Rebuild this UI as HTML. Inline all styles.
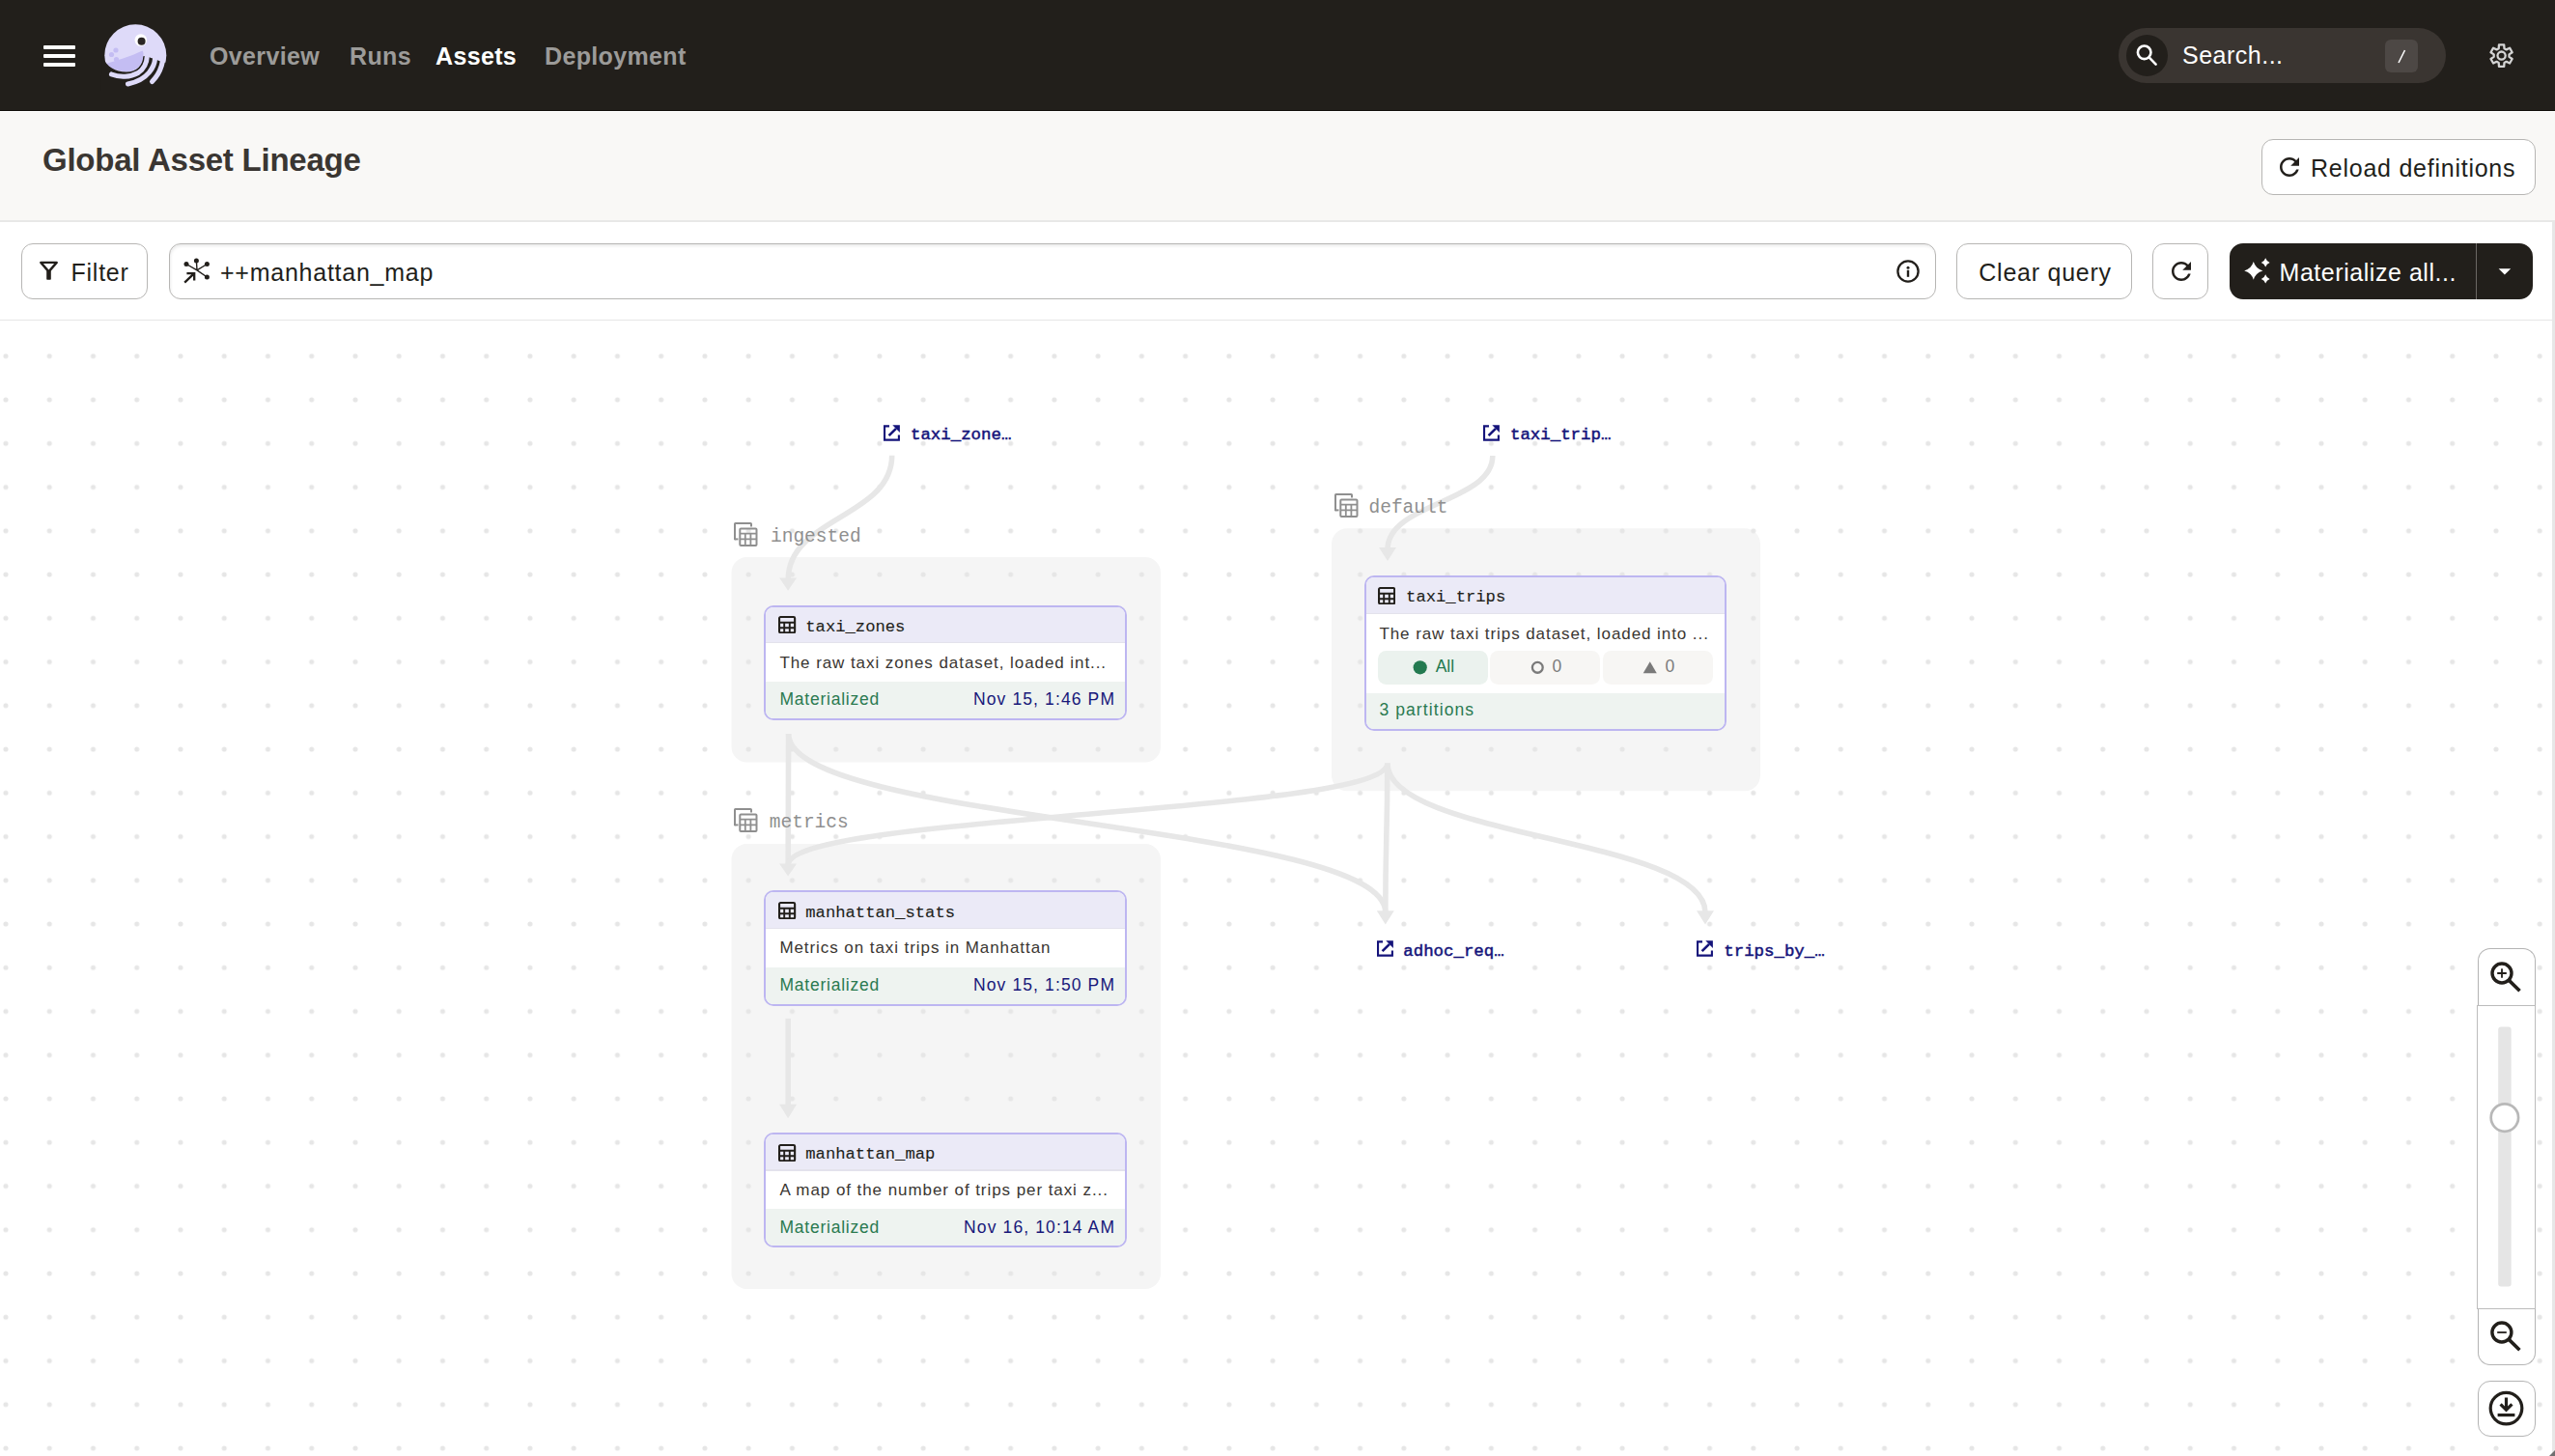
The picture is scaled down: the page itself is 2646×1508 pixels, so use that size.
<!DOCTYPE html>
<html><head><meta charset="utf-8">
<style>
*{box-sizing:border-box;margin:0;padding:0}
html,body{width:2646px;height:1508px;overflow:hidden;background:#fff;font-family:"Liberation Sans",sans-serif;position:relative}
.abs{position:absolute}
#nav{left:0;top:0;width:2646px;height:114px;background:#221f1b}
.ham{position:absolute;left:45px;width:33px;height:3.6px;background:#fff;border-radius:1px}
.navt{position:absolute;top:37.5px;font-size:25px;line-height:40px;color:#9c9b99;font-weight:bold;white-space:nowrap;letter-spacing:0.35px}
#phead{left:0;top:114px;width:2646px;height:116px;background:#f9f8f6;border-top:1px solid #14110d;box-shadow:inset 0 1px 0 #fff;border-bottom:2px solid #e8e8e7}
#title{left:44px;top:141px;font-size:33px;line-height:50px;font-weight:bold;color:#3a3632;white-space:nowrap;letter-spacing:-0.24px}
.btn{position:absolute;border:1.6px solid #b7b6b4;border-radius:12px;background:#fff}
.bt{font-size:25px;line-height:30px;color:#221f1b;white-space:nowrap;letter-spacing:0.75px}
#toolbar{left:0;top:230px;width:2643px;height:102px;background:#fff;border-bottom:1px solid #e6e6e6}
#rbar{left:2643px;top:229px;width:3px;height:1279px;background:#e7e7e7}
/*CSSG*/.glabel{position:absolute;font-family:"Liberation Mono",monospace;font-size:19.5px;line-height:19.5px;color:#8f8f8f;white-space:nowrap}
.node{position:absolute;border:2.5px solid #bdb6f1;border-radius:10px;background:#fff;overflow:hidden}
.nh{position:absolute;left:0;right:0;top:0;background:#ebeaf7}
.ndiv{position:absolute;left:0;right:0;height:1.3px;background:#e3e2ec}
.nf{position:absolute;left:0;right:0;bottom:0;background:#eef3f0}
.mt{position:absolute;font-family:"Liberation Mono",monospace;font-size:17.2px;line-height:17.2px;color:#221f1b;white-space:nowrap;-webkit-text-stroke:0.12px #221f1b}
.st{position:absolute;font-size:17.5px;line-height:17.5px;white-space:nowrap;letter-spacing:0.78px}
.pill{position:absolute;border-radius:8.5px}
.link{position:absolute;font-family:"Liberation Mono",monospace;font-weight:normal;font-size:17.4px;line-height:17.4px;color:#14137a;white-space:nowrap;-webkit-text-stroke:0.5px #14137a}
/*/CSSG*/</style></head><body>
<div id="nav" class="abs">
  <div class="ham" style="top:47px"></div>
  <div class="ham" style="top:56px"></div>
  <div class="ham" style="top:65px"></div>
  <svg class="abs" style="left:104px;top:21px" width="73" height="73" viewBox="0 0 73 73">
    <defs><pattern id="lp" width="2" height="2" patternUnits="userSpaceOnUse"><rect width="2" height="2" fill="#ebe8fc"/><rect x="0.5" y="0.5" width="1" height="1" fill="#b9b1f1"/></pattern></defs>
    <circle cx="36.3" cy="36.3" r="32" fill="url(#lp)"/>
    <path d="M6 45 C16 42 30 38 43.5 31.5 C45 34 44.5 36 44.2 37.2 C44 46 37 53.5 27 53.3 C18 53 11 50 6 45 Z" fill="#c4bdf3"/>
    <path d="M2 38.5 C7 48 15 53.6 27 53.6 C38 53.6 44 46 44.3 37.3 L47.5 37 L53 39.3 L55.5 39.5 L61.2 42.2 L64 42.5 L75 48 L75 75 L0 75 Z" fill="#221f1b"/>
    <g fill="none" stroke="url(#lp)" stroke-linecap="round" stroke-width="5.1">
      <path d="M11.5 56 C20 59.5 31 59 39 54.5 C45 50.5 48 44 48.3 37.5"/>
      <path d="M28.5 66 C38 64 46 59.5 50.5 54 C54.5 49 56.3 44 56.6 39.5"/>
      <path d="M53.5 63.5 C58 59 61.5 53 63.3 47 C64 44.5 64.5 42 64.6 40"/>
    </g>
    <circle cx="16" cy="31" r="2.6" fill="#c4bdf3"/><circle cx="11.5" cy="35.5" r="2.6" fill="#c4bdf3"/><circle cx="16.5" cy="40.5" r="2.6" fill="#c4bdf3"/>
    <circle cx="41.8" cy="20.5" r="6.3" fill="#fff"/>
    <circle cx="42.6" cy="21.8" r="4" fill="#2a2624"/>
  </svg>
  <div class="navt" style="left:217px">Overview</div>
  <div class="navt" style="left:362px">Runs</div>
  <div class="navt" style="left:451px;color:#fff">Assets</div>
  <div class="navt" style="left:564px">Deployment</div>
  <div class="abs" style="left:2194px;top:29px;width:339px;height:57px;border-radius:29px;background:#3a3531"></div>
  <div class="abs" style="left:2202px;top:36px;width:43px;height:43px;border-radius:50%;background:#221f1b"></div>
  <svg class="abs" style="left:2196px;top:30px" width="60" height="56" viewBox="2196 30 60 56"><circle cx="2220.7" cy="54.3" r="6.8" fill="none" stroke="#fff" stroke-width="2.6"/><path d="M2225.6 59.4 L2232.6 66.6" stroke="#fff" stroke-width="2.6" stroke-linecap="round"/></svg>
  <div class="abs" style="left:2260px;top:37px;font-size:25px;line-height:40px;color:#fff;letter-spacing:0.5px">Search...</div>
  <div class="abs" style="left:2470px;top:41px;width:34px;height:34px;border-radius:6px;background:#4d4845"></div>
  <svg class="abs" style="left:2470px;top:41px" width="34" height="34"><path d="M20.5 11 L14 24" stroke="#fff" stroke-width="1.6"/></svg>
  <svg class="abs" style="left:2566px;top:33px" width="50" height="50" viewBox="-24.6 -24.6 50 50"><path d="M-2.87 -7.47 L-2.61 -11.30 L2.61 -11.30 L2.87 -7.47 L5.03 -6.22 L8.48 -7.91 L11.09 -3.39 L7.90 -1.25 L7.90 1.25 L11.09 3.39 L8.48 7.91 L5.03 6.22 L2.87 7.47 L2.61 11.30 L-2.61 11.30 L-2.87 7.47 L-5.03 6.22 L-8.48 7.91 L-11.09 3.39 L-7.90 1.25 L-7.90 -1.25 L-11.09 -3.39 L-8.48 -7.91 L-5.03 -6.22Z" fill="none" stroke="#d4d4d4" stroke-width="2.3" stroke-linejoin="round"/><circle r="4.1" fill="none" stroke="#d4d4d4" stroke-width="2.3"/></svg>
</div>
<div id="phead" class="abs"></div>
<div id="title" class="abs">Global Asset Lineage</div>
<div class="btn" style="left:2342px;top:144px;width:284px;height:58px"></div>
<svg class="abs" style="left:2361px;top:162.6px" width="20" height="20" viewBox="4 4 16 16"><path fill="#221f1b" d="M17.65 6.35C16.2 4.9 14.21 4 12 4c-4.42 0-7.99 3.58-7.99 8s3.57 8 7.99 8c3.73 0 6.84-2.55 7.73-6h-2.08c-.82 2.33-3.04 4-5.65 4-3.31 0-6-2.690-6-6s2.69-6 6-6c1.660 0 3.14.69 4.22 1.78L13 11h7V4l-2.35 2.35z"/></svg>
<div class="abs bt" style="left:2393px;top:159px">Reload definitions</div>

<div id="toolbar" class="abs"></div>
<div class="btn" style="left:22px;top:252px;width:131px;height:58px"></div>
<svg class="abs" style="left:36px;top:266px" width="30" height="30" viewBox="36 266 30 30"><path d="M42.3 271.9 L58.7 271.9 L50.5 281.4 Z" fill="none" stroke="#221f1b" stroke-width="2.4" stroke-linejoin="round"/><rect x="48.2" y="280.3" width="4.6" height="9.5" rx="0.8" fill="#221f1b"/></svg>
<div class="abs bt" style="left:73.5px;top:267px">Filter</div>
<div class="btn" style="left:175px;top:252px;width:1830px;height:58px;box-shadow:inset 1px 2px 3px rgba(0,0,0,0.08)"></div>
<svg class="abs" style="left:185px;top:260px" width="40" height="40" viewBox="185 260 40 40"><g stroke="#221f1b" stroke-width="1.4" fill="none"><path d="M204 279.8 L203.4 270 M204 279.8 L193 273.5 M204 279.8 L214.4 273.5 M204 279.8 L214.4 287"/><path d="M191.2 292.7 L200.6 283.6 M193.4 283.2 L201.2 283.2 L201.2 290.6" stroke-width="2.3"/></g><g fill="#221f1b"><circle cx="203.4" cy="269.9" r="2.5"/><circle cx="193" cy="273.5" r="2.5"/><circle cx="214.4" cy="273.5" r="2.5"/><circle cx="214.4" cy="287" r="2.5"/></g></svg>
<div class="abs bt" style="left:228px;top:267px">++manhattan_map</div>
<svg class="abs" style="left:1962px;top:267px" width="28" height="28" viewBox="1962 267 28 28"><circle cx="1976" cy="281" r="10.6" fill="none" stroke="#221f1b" stroke-width="2.3"/><circle cx="1976" cy="277.2" r="1.5" fill="#221f1b"/><rect x="1974.8" y="279.8" width="2.4" height="7" fill="#221f1b"/></svg>
<div class="btn" style="left:2026px;top:252px;width:182px;height:58px"></div>
<div class="abs bt" style="left:2049.3px;top:267px">Clear query</div>
<div class="btn" style="left:2229px;top:252px;width:58px;height:58px"></div>
<svg class="abs" style="left:2248.6px;top:270.8px" width="20" height="20" viewBox="4 4 16 16"><path fill="#221f1b" d="M17.65 6.35C16.2 4.9 14.21 4 12 4c-4.42 0-7.99 3.58-7.99 8s3.57 8 7.99 8c3.73 0 6.84-2.55 7.730-6h-2.08c-.82 2.33-3.04 4-5.65 4-3.31 0-6-2.69-6-6s2.69-6 6-6c1.66 0 3.14.69 4.22 1.78L13 11h7V4l-2.35 2.35z"/></svg>
<div class="abs" style="left:2309px;top:252px;width:314px;height:58px;border-radius:14px;background:#221f1b"></div>
<div class="abs" style="left:2564px;top:252px;width:1px;height:58px;background:#6b6764"></div>
<svg class="abs" style="left:2320px;top:262px" width="34" height="34" viewBox="2320 262 34 34"><g fill="#fff"><path d="M2333.80 271.10 Q2335.91 278.35 2343.40 280.40 Q2335.91 282.45 2333.80 289.70 Q2331.69 282.45 2324.20 280.40 Q2331.69 278.35 2333.80 271.10Z"/><path d="M2346.20 267.30 Q2347.30 270.75 2350.60 271.90 Q2347.30 273.05 2346.20 276.50 Q2345.10 273.05 2341.80 271.90 Q2345.10 270.75 2346.20 267.30Z"/><path d="M2346.20 284.20 Q2347.30 287.72 2350.60 288.90 Q2347.30 290.07 2346.20 293.60 Q2345.10 290.07 2341.80 288.90 Q2345.10 287.72 2346.20 284.20Z"/></g></svg>
<div class="abs bt" style="left:2360.5px;top:267px;color:#fff;letter-spacing:0.55px">Materialize all...</div>
<svg class="abs" style="left:2580px;top:272px" width="28" height="20" viewBox="2580 272 28 20"><path d="M2587.6 278.2 L2600.2 278.2 L2593.9 284.6 Z" fill="#fff"/></svg>
<div id="rbar" class="abs"></div>

<svg id="gsvg" class="abs" style="left:0;top:332px" width="2643" height="1176" viewBox="0 332 2643 1176">
<defs><pattern id="dots" width="45.245" height="45.245" patternUnits="userSpaceOnUse" x="-16.62" y="346.18"><circle cx="22.6225" cy="22.6225" r="2.55" fill="#e6e6e6"/></pattern></defs>
<rect x="757.5" y="577" width="444.5" height="212.5" rx="16" fill="#f5f5f5"/>
<rect x="1379" y="547.3" width="444" height="272" rx="16" fill="#f5f5f5"/>
<rect x="757.5" y="874" width="444.5" height="461" rx="16" fill="#f5f5f5"/>
<rect x="0" y="332" width="2643" height="1176" fill="url(#dots)"/>
<g fill="#8f8f8f">
</g>
<g fill="none" stroke="#e7e7e7" stroke-width="5.6">
<path d="M923.7 471.7 C923.7 535.85 816.3 535.85 816.3 600"/>
<path d="M1545.8 472 C1545.8 520.5 1437 520.5 1437 569"/>
<path d="M816.6 760 C816.6 828.0 816.2 828.0 816.2 896"/>
<path d="M816.6 760 C816.6 852.5 1434.8 852.5 1434.8 945"/>
<path d="M1436.8 790.5 C1436.8 843.25 816.2 843.25 816.2 896"/>
<path d="M1436.8 790.5 C1436.8 867.75 1434.8 867.75 1434.8 945"/>
<path d="M1436.8 790.5 C1436.8 867.75 1766 867.75 1766 945"/>
<path d="M816.2 1054.9 C816.2 1100.2 816.2 1100.2 816.2 1145.5"/>
</g>
<g fill="#e7e7e7">
<path d="M807.1 598.4 L825.1 598.4 L816.1 611.8 Z"/>
<path d="M1428 567 L1446 567 L1437 581 Z"/>
<path d="M807.1 894.4 L825.1 894.4 L816.1 907.5 Z"/>
<path d="M1425.8 943.2 L1443.8 943.2 L1434.8 957.5 Z"/>
<path d="M1757 943.2 L1775 943.2 L1766 957.5 Z"/>
<path d="M807.1 1143.8 L825.1 1143.8 L816.1 1158.3 Z"/>
</g>
</svg>
<!--G-->
<svg class="abs" style="left:760.3px;top:541.3px" width="25" height="25" viewBox="0 0 25 25"><g fill="none" stroke="#8f8f8f" stroke-width="2"><path d="M1 18.2 V1.6 Q1 1 1.6 1 H17.2 Q18 1 18 1.6 V4.5"/><path d="M1 17.4 H4.5" /><rect x="6.3" y="6.5" width="17.2" height="17.5" rx="1"/><path d="M6.3 11.6 H23.5 M6.3 17.4 H23.5 M11.8 11.6 V24 M17.4 11.6 V24" stroke-width="1.8"/></g></svg>
<div class="glabel" style="left:798px;top:546.75px">ingested</div>
<svg class="abs" style="left:1381.8px;top:511.3px" width="25" height="25" viewBox="0 0 25 25"><g fill="none" stroke="#8f8f8f" stroke-width="2"><path d="M1 18.2 V1.6 Q1 1 1.6 1 H17.2 Q18 1 18 1.6 V4.5"/><path d="M1 17.4 H4.5" /><rect x="6.3" y="6.5" width="17.2" height="17.5" rx="1"/><path d="M6.3 11.6 H23.5 M6.3 17.4 H23.5 M11.8 11.6 V24 M17.4 11.6 V24" stroke-width="1.8"/></g></svg>
<div class="glabel" style="left:1417.5px;top:516.95px">default</div>
<svg class="abs" style="left:760.3px;top:837.3px" width="25" height="25" viewBox="0 0 25 25"><g fill="none" stroke="#8f8f8f" stroke-width="2"><path d="M1 18.2 V1.6 Q1 1 1.6 1 H17.2 Q18 1 18 1.6 V4.5"/><path d="M1 17.4 H4.5" /><rect x="6.3" y="6.5" width="17.2" height="17.5" rx="1"/><path d="M6.3 11.6 H23.5 M6.3 17.4 H23.5 M11.8 11.6 V24 M17.4 11.6 V24" stroke-width="1.8"/></g></svg>
<div class="glabel" style="left:796.8px;top:843.25px">metrics</div>
<div class="node" style="left:791.4px;top:626.7px;width:376px;height:119.2px">
<div class="nh" style="height:36.3px"></div>
<div class="ndiv" style="top:36.3px"></div>
<div class="nf" style="top:77.3px"></div>
</div>
<svg class="abs" style="left:806.4px;top:638.0px" width="18.2" height="18.4" viewBox="0 0 18.2 18.4"><g fill="none" stroke="#221f1b" stroke-width="2.1"><rect x="1.05" y="1.05" width="16.1" height="16.3" rx="1.3"/><path d="M1 6.7 H17.2 M1 12.2 H17.2 M6.2 6.7 V17.4 M11.8 6.7 V17.4" stroke-width="1.9"/></g></svg>
<div class="mt" style="left:834.3px;top:640.82px">taxi_zones</div>
<div class="st" style="left:807.4px;top:677.61px;color:#3a3632;font-size:17px;line-height:17px;letter-spacing:0.93px">The raw taxi zones dataset, loaded int...</div>
<div class="st" style="left:807.4px;top:716.19px;color:#2a7a50">Materialized</div>
<div class="st" style="right:1490.90px;top:716.19px;color:#18187a;letter-spacing:1.12px">Nov 15, 1:46 PM</div>
<div class="node" style="left:1413.2px;top:596.25px;width:374.9px;height:160.25px">
<div class="nh" style="height:36.3px"></div>
<div class="ndiv" style="top:36.3px"></div>
<div class="nf" style="top:119.25px"></div>
</div>
<svg class="abs" style="left:1427.0px;top:607.55px" width="18.2" height="18.4" viewBox="0 0 18.2 18.4"><g fill="none" stroke="#221f1b" stroke-width="2.1"><rect x="1.05" y="1.05" width="16.1" height="16.3" rx="1.3"/><path d="M1 6.7 H17.2 M1 12.2 H17.2 M6.2 6.7 V17.4 M11.8 6.7 V17.4" stroke-width="1.9"/></g></svg>
<div class="mt" style="left:1456.1000000000001px;top:610.37px">taxi_trips</div>
<div class="st" style="left:1428.4px;top:647.96px;color:#3a3632;font-size:17px;line-height:17px;letter-spacing:0.93px">The raw taxi trips dataset, loaded into ...</div>
<div class="pill" style="left:1427.2px;top:673.85px;width:113.6px;height:35.15px;background:#ebf2ee"></div>
<div class="pill" style="left:1543.2px;top:673.85px;width:114.3px;height:35.15px;background:#f7f6f4"></div>
<div class="pill" style="left:1660.0px;top:673.85px;width:114px;height:35.15px;background:#f7f6f4"></div>
<svg class="abs" style="left:1413.2px;top:596.25px" width="374.9" height="160.25" viewBox="0 0 374.9 160.25"><circle cx="57.7" cy="95.35" r="7.1" fill="#237a50"/><circle cx="179.3" cy="95.35" r="5.4" fill="none" stroke="#7a7a7a" stroke-width="2.3"/><path d="M288.7 101.35 L302.8 101.35 L295.75 89.35 Z" fill="#7a7a7a"/></svg>
<div class="st" style="left:1486.7px;top:682.19px;color:#237a50;letter-spacing:0">All</div>
<div class="st" style="left:1607.5px;top:682.19px;color:#7a7a7a;letter-spacing:0">0</div>
<div class="st" style="left:1724.5px;top:682.19px;color:#7a7a7a;letter-spacing:0">0</div>
<div class="st" style="left:1428.4px;top:727.19px;color:#2a7a50;letter-spacing:1.1px">3 partitions</div>
<div class="node" style="left:791.4px;top:922.4px;width:376px;height:119.2px">
<div class="nh" style="height:36.3px"></div>
<div class="ndiv" style="top:36.3px"></div>
<div class="nf" style="top:77.3px"></div>
</div>
<svg class="abs" style="left:806.4px;top:933.6999999999999px" width="18.2" height="18.4" viewBox="0 0 18.2 18.4"><g fill="none" stroke="#221f1b" stroke-width="2.1"><rect x="1.05" y="1.05" width="16.1" height="16.3" rx="1.3"/><path d="M1 6.7 H17.2 M1 12.2 H17.2 M6.2 6.7 V17.4 M11.8 6.7 V17.4" stroke-width="1.9"/></g></svg>
<div class="mt" style="left:834.3px;top:936.52px">manhattan_stats</div>
<div class="st" style="left:807.4px;top:973.31px;color:#3a3632;font-size:17px;line-height:17px;letter-spacing:0.93px">Metrics on taxi trips in Manhattan</div>
<div class="st" style="left:807.4px;top:1011.89px;color:#2a7a50">Materialized</div>
<div class="st" style="right:1490.90px;top:1011.89px;color:#18187a;letter-spacing:1.12px">Nov 15, 1:50 PM</div>
<div class="node" style="left:791.4px;top:1173.2px;width:376px;height:118.4px">
<div class="nh" style="height:36.3px"></div>
<div class="ndiv" style="top:36.3px"></div>
<div class="nf" style="top:77.3px"></div>
</div>
<svg class="abs" style="left:806.4px;top:1184.5px" width="18.2" height="18.4" viewBox="0 0 18.2 18.4"><g fill="none" stroke="#221f1b" stroke-width="2.1"><rect x="1.05" y="1.05" width="16.1" height="16.3" rx="1.3"/><path d="M1 6.7 H17.2 M1 12.2 H17.2 M6.2 6.7 V17.4 M11.8 6.7 V17.4" stroke-width="1.9"/></g></svg>
<div class="mt" style="left:834.3px;top:1187.32px">manhattan_map</div>
<div class="st" style="left:807.4px;top:1224.11px;color:#3a3632;font-size:17px;line-height:17px;letter-spacing:0.93px">A map of the number of trips per taxi z...</div>
<div class="st" style="left:807.4px;top:1262.69px;color:#2a7a50">Materialized</div>
<div class="st" style="right:1490.90px;top:1262.69px;color:#18187a;letter-spacing:1.12px">Nov 16, 10:14 AM</div>
<svg class="abs" style="left:915px;top:439.6px" width="17" height="17" viewBox="0 0 17 17"><g fill="none" stroke="#14137a" stroke-width="2.1"><path d="M6 1.4 H1.05 V15.6 H15.9 V10.4"/><path d="M5.6 11.2 L13 3.8" stroke-width="2.6"/></g><path d="M9.3 0.3 H16.9 V7.9 Z" fill="#14137a"/></svg>
<div class="link" style="left:943px;top:442.46px">taxi_zone…</div>
<svg class="abs" style="left:1536.3px;top:439.6px" width="17" height="17" viewBox="0 0 17 17"><g fill="none" stroke="#14137a" stroke-width="2.1"><path d="M6 1.4 H1.05 V15.6 H15.9 V10.4"/><path d="M5.6 11.2 L13 3.8" stroke-width="2.6"/></g><path d="M9.3 0.3 H16.9 V7.9 Z" fill="#14137a"/></svg>
<div class="link" style="left:1564px;top:442.46px">taxi_trip…</div>
<svg class="abs" style="left:1426px;top:973.8px" width="17" height="17" viewBox="0 0 17 17"><g fill="none" stroke="#14137a" stroke-width="2.1"><path d="M6 1.4 H1.05 V15.6 H15.9 V10.4"/><path d="M5.6 11.2 L13 3.8" stroke-width="2.6"/></g><path d="M9.3 0.3 H16.9 V7.9 Z" fill="#14137a"/></svg>
<div class="link" style="left:1453.3px;top:976.66px">adhoc_req…</div>
<svg class="abs" style="left:1757px;top:973.8px" width="17" height="17" viewBox="0 0 17 17"><g fill="none" stroke="#14137a" stroke-width="2.1"><path d="M6 1.4 H1.05 V15.6 H15.9 V10.4"/><path d="M5.6 11.2 L13 3.8" stroke-width="2.6"/></g><path d="M9.3 0.3 H16.9 V7.9 Z" fill="#14137a"/></svg>
<div class="link" style="left:1785.3px;top:976.66px">trips_by_…</div>
<div class="abs" style="left:2566px;top:982px;width:59.5px;height:60px;border:1.3px solid #b4b4b4;border-bottom:none;border-radius:13px 13px 0 0;background:#fff"></div>
<div class="abs" style="left:2565.3px;top:1041px;width:61px;height:315px;border:1.6px solid #bcbcbc;background:#fff"></div>
<div class="abs" style="left:2566px;top:1355.5px;width:59.5px;height:58px;border:1.3px solid #b4b4b4;border-top:none;border-radius:0 0 13px 13px;background:#fff"></div>
<div class="abs" style="left:2566px;top:1429.5px;width:59.5px;height:58px;border:1.3px solid #b4b4b4;border-radius:13px;background:#fff"></div>
<svg class="abs" style="left:2560px;top:975px" width="72" height="520" viewBox="2560 975 72 520">
<rect x="2587.2" y="1063.4" width="13.5" height="269" rx="3" fill="#e5e5e5"/>
<circle cx="2593.9" cy="1157.6" r="14.2" fill="#fff" stroke="#b8b8b8" stroke-width="2.7"/>
<g fill="none" stroke="#221f1b" stroke-linecap="butt">
<circle cx="2591" cy="1008" r="10" stroke-width="3.4"/><path d="M2586.2 1008 H2595.8 M2591 1003.2 V1012.8" stroke-width="1.8"/><path d="M2598.4 1015.4 L2609.5 1026.3" stroke-width="3.6"/>
<circle cx="2590.9" cy="1380" r="10" stroke-width="3.4"/><path d="M2586.2 1380 H2595.8" stroke-width="1.8"/><path d="M2598.3 1387.4 L2609.4 1398.2" stroke-width="3.6"/>
<circle cx="2595.5" cy="1458.6" r="16.3" stroke-width="3.2"/><path d="M2595.5 1447.5 V1460" stroke-width="3.2"/><path d="M2589.6 1454.3 L2595.5 1460.3 L2601.4 1454.3" stroke-width="3.2"/><path d="M2586.6 1465.6 H2604.4" stroke-width="3.2"/>
</g>
</svg>

<!--/G-->
<svg class="abs" style="left:2640px;top:1502px" width="6" height="6"><path d="M6 0 L6 6 L0 6 Z" fill="#6f6f6f"/></svg>
</body></html>
